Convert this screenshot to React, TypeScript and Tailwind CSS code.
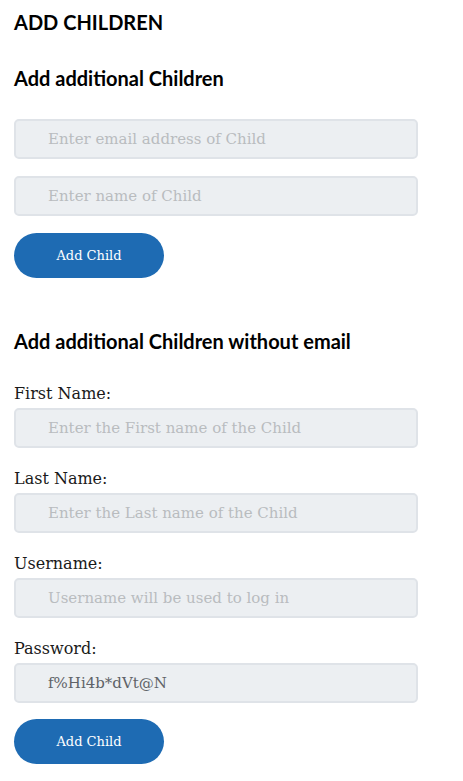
const serif = "font-['DejaVu_Serif',serif]";

function Field({ placeholder, value }: { placeholder: string; value?: string }) {
    return (
        <input
            type="text"
            placeholder={placeholder}
            defaultValue={value}
            className={`${serif} block h-10 w-[404px] rounded-[5px] border-2 border-[#dfe3e8] bg-[#eceff2] pl-[32px] text-[15px] text-[#5f6368] placeholder:text-[#b9bcbf] outline-none`}
        />
    );
}

function AddButton() {
    return (
        <button
            type="button"
            className={`${serif} h-[45px] w-[150px] rounded-full bg-[#1e6bb3] text-[13px] text-white`}
        >
            Add Child
        </button>
    );
}

function Labeled({ label, placeholder, value }: { label: string; placeholder: string; value?: string }) {
    return (
        <div>
            <p className={`${serif} mb-[2px] text-[16px] leading-[24px] text-[#1a1a1a]`}>{label}</p>
            <Field placeholder={placeholder} value={value} />
        </div>
    );
}

export default function App() {
    return (
        <main className="min-h-screen bg-white px-[14px] pt-[10px] font-['Lato',sans-serif]">
            <h1 className="text-[20px] font-bold leading-[24px] text-black">ADD CHILDREN</h1>

            <h2 className="mt-[32px] text-[20px] font-bold leading-[24px] text-black">
                Add additional Children
            </h2>
            <div className="mt-[29px] flex flex-col gap-[17px]">
                <Field placeholder="Enter email address of Child" />
                <Field placeholder="Enter name of Child" />
                <AddButton />
            </div>

            <h2 className="mt-[51px] text-[20px] font-bold leading-[24px] text-black">
                Add additional Children without email
            </h2>
            <div className="mt-[29px] flex flex-col gap-[19px]">
                <Labeled label="First Name:" placeholder="Enter the First name of the Child" />
                <Labeled label="Last Name:" placeholder="Enter the Last name of the Child" />
                <Labeled label="Username:" placeholder="Username will be used to log in" />
                <Labeled label="Password:" placeholder="" value="f%Hi4b*dVt@N" />
            </div>
            <div className="mt-[16px]">
                <AddButton />
            </div>
        </main>
    );
}
